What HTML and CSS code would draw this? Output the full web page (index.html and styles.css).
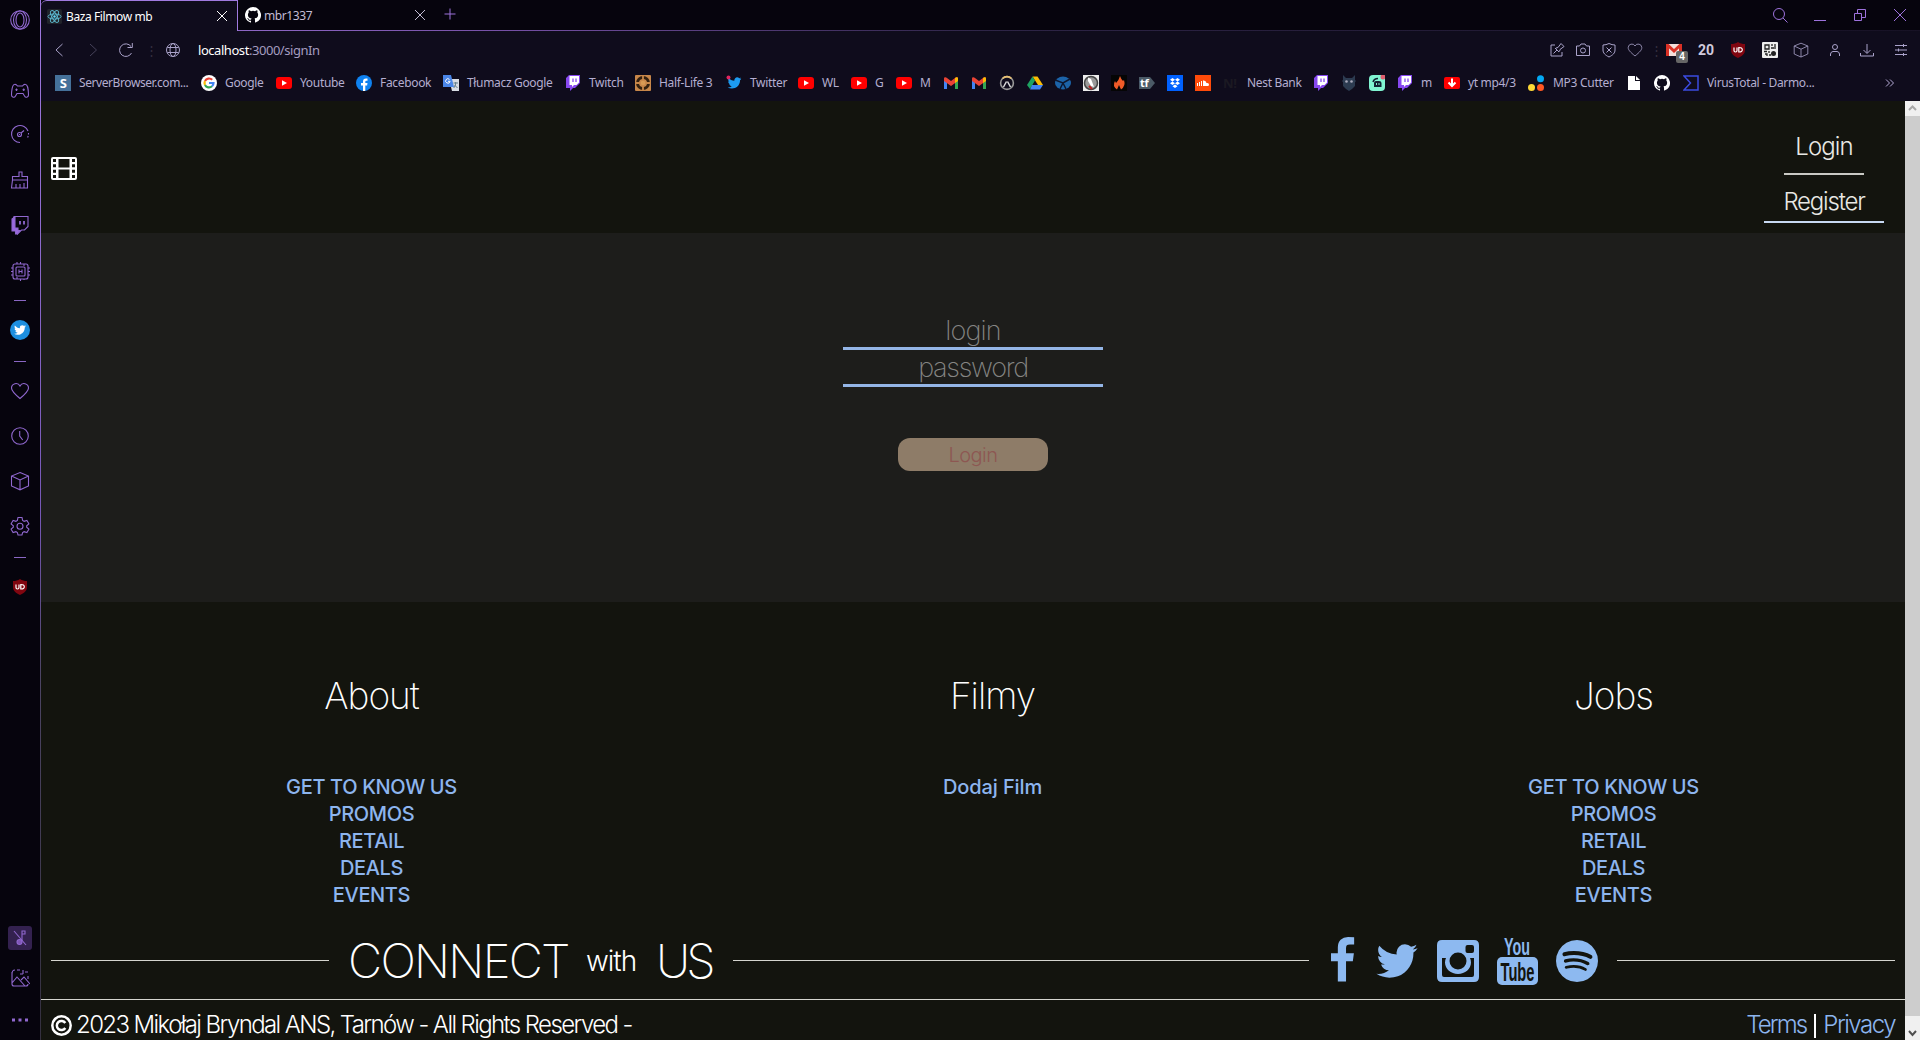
FILE: index.html
```html
<!DOCTYPE html>
<html lang="pl">
<head>
<meta charset="utf-8">
<title>Baza Filmow mb</title>
<link rel="stylesheet" href="styles.css">
</head>
<body>
<svg class="defs" aria-hidden="true">
  <symbol id="yt" viewBox="0 0 16 16"><rect y="2" width="16" height="12" rx="3" fill="#f00"/><path d="M6 5.2v5.6L11 8z" fill="#fff"/></symbol>
  <symbol id="twitch" viewBox="0 0 16 16"><path d="M4 0 1 3v10h4v3l3-3h2l5-5V0z" fill="#8748f0"/><path d="M4.500 1H14v6.500l-2.500 2.500H9l-2 2v-2H4.500z" fill="#fff"/><path d="M8 3.500v3.500M11 3.500v3.500" stroke="#8748f0" stroke-width="1.300"/></symbol>
  <symbol id="gmail" viewBox="0 0 16 16"><path d="M1 14V4l3 2v8z" fill="#4285f4"/><path d="M12 14V6l3-2v10z" fill="#34a853"/><path d="M1 6V3.500C1 2 3 2 4 3l4 3 4-3c1-1 3-1 3 .5V6l-7 5z" fill="#ea4335"/><path d="M12 3v5l3-2V3.500C15 2 13 2 12 3z" fill="#fbbc04"/></symbol>
  <symbol id="github" viewBox="0 0 16 16"><path fill="#fff" d="M8 0a8 8 0 0 0-2.530 15.590c.4.070.55-.17.55-.38v-1.490c-2.230.48-2.690-.95-2.690-.95-.36-.92-.89-1.170-.89-1.170-.73-.5.060-.49.060-.49.8.060 1.230.83 1.230.83.71 1.220 1.870.87 2.330.66.070-.52.28-.87.51-1.070-1.780-.2-3.640-.89-3.640-3.950 0-.87.31-1.590.82-2.150-.08-.2-.36-1.020.08-2.120 0 0 .67-.21 2.200.82a7.600 7.600 0 0 1 4 0c1.530-1.040 2.200-.82 2.200-.82.44 1.100.16 1.920.08 2.120.51.56.82 1.270.82 2.150 0 3.070-1.870 3.750-3.650 3.950.29.25.54.73.54 1.480v2.200c0 .21.15.46.55.38A8 8 0 0 0 8 0z"/></symbol>
  <symbol id="bird" viewBox="100 250 1590 1300"><path d="M1684 408q-67 98-162 167 1 14 1 42 0 130-38 259.500t-115.500 248.500-184.500 210.500-258 146-323 54.500q-271 0-496-145 35 4 78 4 225 0 401-138-105-2-188-64.500t-114-159.500q33 5 61 5 43 0 85-11-112-23-185.500-111.500t-73.500-205.500v-4q68 38 146 41-66-44-105-115t-39-154q0-88 44-163 121 149 294.500 238.500t371.500 99.500q-8-38-8-74 0-134 94.500-228.500t228.500-94.500q140 0 236 102 109-21 205-78-37 115-142 178 93-10 186-50z" fill="currentColor"/></symbol>
  <symbol id="heart" viewBox="0 0 20 20"><path d="M10 17.500C4 12.500 1.500 10 1.500 7A4.500 4.500 0 0 1 10 5a4.500 4.500 0 0 1 8.500 2c0 3-2.500 5.500-8.500 10.500z"/></symbol>
  <symbol id="cube" viewBox="0 0 20 20"><path d="M10 1.500 18.500 5v10L10 18.800 1.500 15V5zM1.500 5 10 9l8.500-4M10 9v9.800"/></symbol>
  <symbol id="ublock" viewBox="0 0 16 16"><path d="M8 0c2 1.500 4.500 2 7 2v6c0 4-3 6-7 8-4-2-7-4-7-8V2c2.500 0 5-.5 7-2z" fill="#800610"/><path d="M4 5.500v3q0 1.500 1.500 1.500T7 8.500v-3M8.800 5.500V10q3.500.2 3.500-2.200T8.800 5.500z" fill="none" stroke="#fff" stroke-width="1.200"/></symbol>
  <symbol id="close" viewBox="0 0 12 12"><path d="m1 1 10 10M11 1 1 11"/></symbol>
</svg>
<div class="browser">
  <nav class="sidebar">
    <svg viewBox="0 0 20 20"><circle cx="10" cy="10" r="9.300"/><ellipse cx="10" cy="10" rx="6.500" ry="9"/><ellipse cx="10" cy="10" rx="4" ry="7"/></svg>
    <svg viewBox="0 0 20 20"><path d="M4.500 3.500Q6 3 7.500 5h5q1.500-2 3-1.500c2.500 0 3 8 3 10.500s-3 3-4 1l-1.500-2.500H7L5.500 15c-1 2-4 1.500-4-1s.5-10.500 3-10.500zM5.300 8.800h2.400M6.500 7.600V10M12.500 8.800h2.400M13.700 7.600V10"/></svg>
    <svg viewBox="0 0 20 20"><path d="M10 18.500A8.500 8.500 0 1 1 18 7"/><path d="M18.500 9a8.500 8.500 0 0 1-1.500 5.500" stroke-dasharray="1.500 1.500"/><circle cx="9.500" cy="10.500" r="2"/><path d="m11 9 3-2.500M9.500 10v1"/></svg>
    <svg viewBox="0 0 20 20"><path d="M2.500 10h15v-3.500H12V2H9v4.500H2.500V10l-1 8h16V10M6 14v4M10 14v4M14 13v5"/></svg>
    <svg viewBox="0 0 20 20"><path d="M4 1.500h14v10l-3.500 3.500h-3l-4 4V15H3V4z"/><path d="M2 4 5 2v11h3v2.500h2L7 19H5.500v-3H2z" fill="#9a68e0"/><path d="M10 6v3.500M14 6v3.500" stroke-width="1.800"/></svg>
    <svg viewBox="0 0 20 20"><rect x="3" y="3" width="15" height="15" rx="2"/><rect x="6" y="6" width="9" height="9" rx="1"/><path d="M9 8.500v4M12 8.500v4M9 10.500h3M7 3V1M10.500 3V1M14 3v2M7 18v-2M10.500 18v2M14 18v1M3 7H1M3 10.500H1M3 14H1M18 7h2M18 10.500h2M18 14h2"/></svg>
    <i class="dash"></i>
    <span class="round"><svg><use href="#bird"/></svg></span>
    <i class="dash"></i>
    <svg><use href="#heart"/></svg>
    <svg viewBox="0 0 20 20"><circle cx="10" cy="10" r="8.300"/><path d="M9.700 5v5l3 4"/></svg>
    <svg><use href="#cube"/></svg>
    <svg viewBox="0 0 20 20"><path d="M8 1.500h4l.6 2.900 1.500.9 2.800-.9 2 3.400-2.200 2v1.400l2.200 2-2 3.400-2.800-.9-1.500.9-.6 2.400H8l-.6-2.400-1.500-.9-2.800.9-2-3.400 2.200-2V9.800l-2.200-2 2-3.400 2.800.9 1.500-.9z"/><circle cx="10" cy="10.300" r="3"/></svg>
    <i class="dash"></i>
    <svg class="small"><use href="#ublock"/></svg>
    <span class="muted"><svg viewBox="0 0 20 20"><path d="M12 13V3h3v3h-3"/><circle cx="9.500" cy="14" r="2.500" fill="#8055b8"/><path d="m4 3 12 14"/></svg></span>
    <svg viewBox="0 0 20 20"><path d="M2 4v12q0 2 2 2h12q2 0 2-2M2 6q0-4 3-4M7 2h3M13 2v4M15 4h3M18 8v3M2 15l5-6 8 9M11 12l3-3 6 7M10 6h3"/></svg>
    <svg viewBox="0 0 20 20"><path d="M2 10h3M8.500 10h3M15 10h3" stroke-width="2.800"/></svg>
  </nav>
  <div class="window">
    <div class="tabs">
      <div class="tab active">
        <svg class="react" viewBox="0 0 16 16"><rect width="16" height="16" rx="2" fill="#20232a"/><g fill="none" stroke="#5cb9d0"><ellipse cx="8" cy="8" rx="7" ry="2.700"/><ellipse cx="8" cy="8" rx="7" ry="2.700" transform="rotate(60 8 8)"/><ellipse cx="8" cy="8" rx="7" ry="2.700" transform="rotate(120 8 8)"/></g><circle cx="8" cy="8" r="1.300" fill="#61dafb"/></svg>
        <span>Baza Filmow mb</span><svg class="x"><use href="#close"/></svg>
      </div>
      <div class="tab">
        <svg class="gh"><use href="#github"/></svg><span>mbr1337</span><svg class="x"><use href="#close"/></svg>
      </div>
      <svg class="plus" viewBox="0 0 12 12"><path d="M6 .5v11M.5 6h11"/></svg>
      <div class="controls">
        <svg viewBox="0 0 16 16"><circle cx="7" cy="7" r="5.500"/><path d="m11 11 4.500 4.500"/></svg>
        <svg viewBox="0 0 16 16"><path d="M2 13.500h12"/></svg>
        <svg viewBox="0 0 16 16"><path d="M2.500 6.500h7v7h-7zM5.500 6.500v-4h8v8h-4"/></svg>
        <svg viewBox="0 0 16 16"><path d="m2 2 12 12M14 2 2 14"/></svg>
      </div>
    </div>
    <div class="toolbar">
      <svg viewBox="0 0 16 16"><path d="M11.500 2 5 8l6.500 6"/></svg>
      <svg class="off" viewBox="0 0 16 16"><path d="m5 2 6.500 6L5 14"/></svg>
      <svg viewBox="0 0 16 16"><path d="M13.500 11A6.300 6.300 0 1 1 13 4.500M14.300 1v4.500H9.500"/></svg>
      <span class="sep">⋮</span>
      <svg viewBox="0 0 16 16"><circle cx="8" cy="8" r="6.500"/><ellipse cx="8" cy="8" rx="3" ry="6.500"/><path d="M2.300 5.500h11.400M2.300 10.500h11.400"/></svg>
      <p class="url"><b>localhost</b>:3000/signIn</p>
      <div class="actions">
        <svg viewBox="0 0 16 16"><path d="M6 3H2v11h11v-4M4.500 11.500 8 8M6 6l4 4M7 6l2-.5 3-4 3 3-4 3-.5 2"/></svg>
        <svg viewBox="0 0 16 16"><path d="M1.500 4h3L6 2h4l1.500 2h3v9.500h-13z"/><circle cx="8" cy="8.500" r="2.500"/></svg>
        <svg viewBox="0 0 16 16"><path d="M8 1.500q3 1.500 6 1.500v5c0 3-2 5-6 7-4-2-6-4-6-7V3q3 0 6-1.500zM5.500 5.500l5 5M10.500 5.500l-5 5"/></svg>
        <svg><use href="#heart"/></svg>
        <span class="sep">⋮</span>
        <span class="mail"><svg viewBox="0 0 16 12"><path d="M0 0h16v12H0z" fill="#f4dedb"/><path d="M1.500 12V1L8 7l6.500-6v11" fill="none" stroke="#d93025" stroke-width="3"/></svg><em>4</em></span>
        <strong>20</strong>
        <svg class="solid"><use href="#ublock"/></svg>
        <svg class="solid" viewBox="0 0 16 16"><rect width="16" height="16" rx="1" fill="#eee"/><path d="M3 3h4v4H3zM10 2v2M13 2v5M9 6h3M2 9.500h3M3 12h2v2M7 9v2M7 13h2" fill="none" stroke="#222" stroke-width="1.300"/><circle cx="11.500" cy="11.500" r="2.500" fill="#222"/></svg>
        <svg><use href="#cube"/></svg>
        <svg viewBox="0 0 16 16"><circle cx="8" cy="5" r="2.500"/><path d="M3.500 14v-2Q4 9.500 6 9.500h4q2 0 2.500 2.500v2"/></svg>
        <svg viewBox="0 0 16 16"><path d="M8 2v9M4.500 8 8 11.500 11.500 8M1.500 11v3h13v-3"/></svg>
        <svg viewBox="0 0 16 16"><path d="M2 3.500h12M2 8h12M2 12.500h12M10.500 2v3M5.500 6.500v3M10.500 11v3"/></svg>
      </div>
    </div>
    <div class="bookmarks">
      <a class="server"><svg viewBox="0 0 16 16"><rect width="16" height="16" fill="#45719a"/><text x="8" y="13" text-anchor="middle" class="ico-s">S</text></svg>ServerBrowser.com...</a>
      <a><svg viewBox="0 0 16 16"><circle cx="8" cy="8" r="8" fill="#fff"/><g fill="none" stroke-width="2.200"><path d="M4 6a4.500 4.500 0 0 1 7.200-1.200" stroke="#ea4335"/><path d="M4 10a4.500 4.500 0 0 1 0-4" stroke="#fbbc05"/><path d="M11 11.300A4.500 4.500 0 0 1 4 10" stroke="#34a853"/><path d="M8 8h4.500a4.500 4.500 0 0 1-1.500 3.300" stroke="#4285f4"/></g></svg>Google</a>
      <a><svg><use href="#yt"/></svg>Youtube</a>
      <a><svg viewBox="0 0 16 16"><circle cx="8" cy="8" r="8" fill="#0f82f0"/><path d="M7 16v-5.500H5V8h2V6.500Q7 3.500 10 3.500h1.500v2.200h-1.200q-1 0-1 1V8h2.200l-.4 2.500H9.300V16z" fill="#fff"/></svg>Facebook</a>
      <a><svg viewBox="0 0 16 16"><path d="M6 4h10v12H9z" fill="#d8dce4"/><path d="M0 0h8l3 12H0z" fill="#4a86e8"/><path d="M7 6.500A2.200 2.200 0 1 1 6.500 4.500M5 6.300h2.200" fill="none" stroke="#fff"/><path d="M10.500 8h4.500M12.700 7v1q0 3-2 5M11.500 10l3 3" fill="none" stroke="#607d8b"/></svg>Tłumacz Google</a>
      <a><svg><use href="#twitch"/></svg>Twitch</a>
      <a><svg viewBox="0 0 16 16"><rect width="16" height="16" rx="1" fill="#c8874a"/><circle cx="8" cy="8" r="5.500" fill="none" stroke="#33200f" stroke-width="3"/><path d="M8 0v16M0 8h16" stroke="#c8874a" stroke-width="1.800"/><circle cx="8" cy="8" r="2.300" fill="#d89a55"/></svg>Half-Life 3</a>
      <a><svg class="tw" viewBox="0 0 16 16"><use href="#bird" x="1.500" y="2" width="14" height="12"/><circle cx="2.500" cy="2.500" r="2" fill="#e0245e"/></svg>Twitter</a>
      <a><svg><use href="#yt"/></svg>WL</a>
      <a><svg><use href="#yt"/></svg>G</a>
      <a><svg><use href="#yt"/></svg>M</a>
      <a><svg><use href="#gmail"/></svg></a>
      <a><svg><use href="#gmail"/></svg></a>
      <a><svg viewBox="0 0 16 16"><circle cx="8" cy="8" r="6.400" fill="none" stroke="#999" stroke-width="1.600"/><path d="M3.500 3.500a6.400 6.400 0 0 1 9 0" fill="none" stroke="#e8c070" stroke-width="1.600"/><path d="m4.500 12 3-5.500M11.500 12l-3-5.500" stroke="#ddd" stroke-width="1.500"/></svg></a>
      <a><svg viewBox="0 0 16 16"><path d="M5.500 1.500h5L16 10h-5z" fill="#fbbc04"/><path d="M5.500 1.500 8 5.500 3 14l-3-4z" fill="#1ea362"/><path d="M5 10h11l-3 4.500H3z" fill="#4285f4"/></svg></a>
      <a><svg viewBox="0 0 16 16"><ellipse cx="8" cy="8" rx="8" ry="6.500" fill="#1c63a8"/><path d="m0 5 8 3 7-4M8 8l-3 6M8 8l3 6" fill="none" stroke="#0d1730" stroke-width="1.500"/></svg></a>
      <a><svg viewBox="0 0 16 16"><rect width="16" height="16" fill="#eee"/><circle cx="8" cy="8" r="6.500" fill="#999" stroke="#444" stroke-width="1.500"/><path d="M5 2.500 8 4l3 8-3-1-3-5z" fill="#fff"/><path d="m6 11 3 3" stroke="#b22" stroke-width="2"/></svg></a>
      <a><svg viewBox="0 0 16 16"><rect width="16" height="16" fill="#050505"/><path d="M9 1q1 3 3 5l1-1q2 6-3 9.500L8 10l-2 4.500Q1 11 4 6l1 2q3-3 4-7z" fill="#ef5a28"/></svg></a>
      <a><svg viewBox="0 0 16 16"><path d="M0 2h11l5 6-5 6H0z" fill="#4b5a66"/><text x="1" y="12" class="ico-t">tf</text></svg></a>
      <a><svg viewBox="0 0 16 16"><rect width="16" height="16" fill="#0061fe"/><path d="m5.500 3 2.500 1.700-2.500 1.700L3 4.700zm5 0L13 4.700l-2.500 1.700L8 4.700zm-5 3.500L8 8.200 5.500 9.900 3 8.200zm5 0L13 8.200l-2.500 1.700L8 8.200zM8 9.500l2.500 1.700L8 13l-2.500-1.800z" fill="#fff"/></svg></a>
      <a><svg viewBox="0 0 16 16"><rect width="16" height="16" fill="#ff4b0a"/><path d="M2.500 8v3M4.500 7v4M6.500 6v5" stroke="#fff"/><path d="M8 11V5.500Q11 5 11.500 8q2.500-.5 2.500 1.500T12 11z" fill="#fff"/></svg></a>
      <a><svg viewBox="0 0 16 16"><text x="0" y="13" class="ico-n">N!</text></svg>Nest Bank</a>
      <a><svg><use href="#twitch"/></svg></a>
      <a><svg viewBox="0 0 16 16"><path d="M2 0 5 3h6l3-3v5l1 1-1 1v4l-3 3-3 2-3-2-3-3V7L1 6l1-1z" fill="#2c3b50"/><circle cx="5.500" cy="6.500" r="1.300" fill="#aab"/><circle cx="10.500" cy="6.500" r="1.300" fill="#aab"/></svg></a>
      <a><svg viewBox="0 0 16 16"><rect width="16" height="16" rx="4" fill="#80f5d2"/><path d="M5 12V8q0-2 2-2h3q2.500 0 2.500 2v4z" fill="#123"/><path d="M4 7q1-3.500 5-3.500" fill="none" stroke="#123" stroke-width="1.500"/><path d="M7.500 8v2M10 8v2" stroke="#80f5d2"/><circle cx="14" cy="2" r="2.500" fill="#e06070"/></svg></a>
      <a><svg><use href="#twitch"/></svg>m</a>
      <a><svg viewBox="0 0 16 16"><rect y="2" width="16" height="12" rx="2" fill="#f00"/><path d="M8 3.500v6M4.500 7.500 8 11l3.500-3.500" fill="none" stroke="#fff" stroke-width="2"/></svg>yt mp4/3</a>
      <a class="cutter"><svg viewBox="0 0 16 16"><circle cx="3.500" cy="12.500" r="3.500" fill="#fdd835"/><circle cx="12.500" cy="12.500" r="3.500" fill="#ff5722"/><circle cx="12.500" cy="3.700" r="3.500" fill="#03a9f4"/></svg>MP3 Cutter</a>
      <a><svg viewBox="0 0 16 16"><path d="M2 1h7v5h5v9H2zM10 1l4 4h-4z" fill="#fff"/></svg></a>
      <a><svg><use href="#github"/></svg></a>
      <a><svg viewBox="0 0 16 16"><path d="M1 1h14v14H1l6.500-7z" fill="none" stroke="#3b4be0" stroke-width="1.500"/></svg>VirusTotal - Darmo...</a>
      <a><svg viewBox="0 0 16 16"><path d="m5 4.500 3.500 3.500L5 11.500M9 4.500l3.500 3.500L9 11.500" fill="none" stroke="#b5abd6"/></svg></a>
    </div>
    <div class="view">
      <div class="page">
        <header>
          <svg class="film" viewBox="0 0 26 23"><path fill-rule="evenodd" fill="#fff" d="M2 0h22q2 0 2 2v19q0 2-2 2H2q-2 0-2-2V2Q0 0 2 0zM7.500 2v8.500h11V2zM7.500 12.500V21h11v-8.500zM2 2v3h3V2zM2 7.300v3h3v-3zM2 12.700v3h3v-3zM2 18v3h3v-3zM21 2v3h3V2zM21 7.300v3h3v-3zM21 12.700v3h3v-3zM21 18v3h3v-3z"/></svg>
          <div class="auth"><a class="in">Login</a><a class="up">Register</a></div>
        </header>
        <main>
          <form>
            <input type="text" placeholder="login">
            <input type="password" class="pass" placeholder="password">
            <button type="button">Login</button>
          </form>
        </main>
        <footer>
          <div class="columns">
            <section><h2>About</h2><ul><li>GET TO KNOW US</li><li>PROMOS</li><li>RETAIL</li><li>DEALS</li><li>EVENTS</li></ul></section>
            <section><h2>Filmy</h2><ul><li class="film-link">Dodaj Film</li></ul></section>
            <section><h2>Jobs</h2><ul><li>GET TO KNOW US</li><li>PROMOS</li><li>RETAIL</li><li>DEALS</li><li>EVENTS</li></ul></section>
          </div>
          <div class="connect">
            <hr class="first">
            <span class="big c1">CONNECT</span><span class="with">with</span><span class="big c2">US</span>
            <hr class="middle">
            <div class="social">
              <svg width="24" height="48" viewBox="479 0 896 1792"><path d="M1343 12v264h-157q-86 0-116 36t-30 108v189h293l-39 296h-254v759h-306v-759h-255v-296h255v-218q0-186 104-288.500t277-102.500q147 0 228 12z"/></svg>
              <svg width="42" height="34"><use href="#bird"/></svg>
              <svg width="42" height="42" viewBox="0 0 42 42"><path fill-rule="evenodd" d="M5 0h32q5 0 5 5v32q0 5-5 5H5q-5 0-5-5V5q0-5 5-5zM5 18v17q0 2 2 2h28q2 0 2-2V18h-4q1 2 1 4.500C34 29 28 34 21 34S8 29 8 22.500q0-2.500 1-4.500zM30.500 5q-2 0-2 2v4q0 2 2 2H35q2 0 2-2V7q0-2-2-2zM21 12.500a8.500 8.500 0 1 0 0 17 8.500 8.500 0 0 0 0-17z"/></svg>
              <svg class="youtube" width="41" height="48" viewBox="0 0 41 48"><rect y="20" width="41" height="28" rx="5"/><text x="7" y="17.500" textLength="26" lengthAdjust="spacingAndGlyphs">You</text><text x="3.500" y="43.500" textLength="34" lengthAdjust="spacingAndGlyphs" class="dark">Tube</text></svg>
              <svg width="42" height="42" viewBox="128 128 1536 1536"><path d="M1255 1210q0-32-30-51-193-115-447-115-133 0-287 34-42 9-42 52 0 20 13.500 34.500t35.500 14.500q5 0 37-8 132-27 243-27 226 0 397 103 19 11 33 11 19 0 33-13.500t14-34.500zm96-215q0-40-35-61-237-141-548-141-153 0-303 42-48 13-48 64 0 25 17.500 42.500t42.500 17.500q7 0 37-8 122-33 251-33 279 0 488 124 24 13 38 13 25 0 42.500-17.500t17.500-42.500zm108-248q0-47-40-70-126-73-293-110.500t-343-37.500q-204 0-364 47-23 7-38.500 25.500t-15.500 48.500q0 31 20.500 52t51.500 21q11 0 40-8 133-37 307-37 159 0 309.500 34t253.500 95q21 12 40 12 29 0 50.500-20.500t21.500-51.500zm205 149q0 209-103 385.500t-279.500 279.500-385.500 103-385.500-103-279.500-279.500-103-385.500 103-385.500 279.500-279.500 385.500-103 385.500 103 279.500 279.500 103 385.500z"/></svg>
            </div>
            <hr class="last">
          </div>
          <div class="legal">
            <svg class="copy" viewBox="0 0 21 21"><circle cx="10.500" cy="10.500" r="9.200"/><path d="M14.300 13a4.600 4.600 0 1 1 0-5"/></svg>
            <span class="rights">2023 Mikołaj Bryndal ANS, Tarnów - All Rights Reserved -</span>
            <span class="terms">Terms</span><i class="bar"></i><span class="privacy">Privacy</span>
          </div>
        </footer>
      </div>
      <div class="scrollbar">
        <svg viewBox="0 0 15 15"><path d="m4 9 3.500-3.500L11 9" stroke="#a8a8a8"/></svg>
        <i></i>
        <svg class="down" viewBox="0 0 15 24"><path d="m4 15 3.500 4 3.500-4" stroke="#505050"/></svg>
      </div>
    </div>
  </div>
</div>
</body>
</html>
```
FILE: styles.css
```css
* { box-sizing: border-box; }
body { margin: 0; background: #06040d; font-family: "Inter", "Liberation Sans", sans-serif; overflow: hidden; }
svg { display: block; flex: none; }
.defs { position: absolute; width: 0; height: 0; }
.browser { display: flex; width: 1920px; height: 1040px; }

.sidebar { width: 40px; display: grid; justify-items: center; align-items: start;
  grid-template-rows: 71px 43px 46px 45px 46px 39px 20px 41px 20px 45px 45px 45px 41px 22px 347px 42px 42px 30px;
  padding-top: 10px; }
.sidebar svg { width: 20px; height: 20px; fill: none; stroke: #9068cf; stroke-width: 1.1; }
.sidebar .small { width: 16px; height: 16px; stroke: none; }
.dash { width: 12px; height: 1px; background: #8a67c4; }
.round { width: 20px; height: 20px; border-radius: 50%; background: #1d8fdf; display: grid; place-items: center; color: #fff; }
.sidebar .round svg { width: 12px; height: 10px; stroke: none; }
.muted { width: 24px; height: 24px; border-radius: 3px; background: #33214f; display: grid; place-items: center; }

.window { width: 1880px; display: flex; flex-direction: column; border-left: 1px solid;
  border-image: linear-gradient(#a07ae0, #7557b5 50%, #4c4463 65%, #34303f) 1; }
.tabs { height: 31px; display: flex; background: linear-gradient(90deg, #a078dc, #7550a5 25%, #2e2547 50%, #171225) 0 100% / 100% 1px no-repeat; }
.tab { width: 199px; height: 30px; padding-left: 8px; display: flex; align-items: center; font: 12px "Noto Sans", sans-serif; color: #c3bcd4; }
.tab.active { width: 197px; height: 31px; background: #0f0c1c; border-top: 1px solid #a07ae0; border-right: 1px solid #a07ae0; border-top-left-radius: 6px; padding-left: 6px; color: #fff; }
.react { width: 15px; height: 15px; margin-right: 4px; }
.gh { width: 16px; height: 16px; margin-left: -1px; margin-right: 3px; }
.tab span { flex: 1; letter-spacing: -.4px; }
.x { width: 12px; height: 12px; stroke: currentColor; margin-right: 8px; }
.active .x { margin-right: 9px; }
.tab:not(.active) .x { margin-right: 11px; }
.plus { width: 12px; height: 12px; margin: 8px 0 0 7px; fill: none; stroke: #9d72dc; }
.controls { margin: 7px 12px 0 auto; display: flex; gap: 24px; }
.controls svg { width: 16px; height: 16px; fill: none; stroke: #9d72dc; }

.toolbar { height: 37px; background: #0f0c1c; display: grid; align-items: center;
  grid-template-columns: 34px 33px 27px 20px 33px 1343px 1fr; padding-left: 10px; }
.toolbar > svg, .actions > svg { width: 16px; height: 16px; fill: none; stroke: #aaa3ca; }
.toolbar .off { stroke: #46425a; }
.toolbar .solid { stroke: none; }
.sep { color: #33303f; font-size: 13px; }
.url { margin: 0; font: 13px "Noto Sans", sans-serif; letter-spacing: -.45px; color: #a49cc0; }
.url b { color: #fff; font-weight: 400; }
.actions { margin-left: 8px; display: grid; align-items: center; grid-template-columns: 26px 26px 26px 23px 16px 32px 32px 32px 31px 34px 32px 34px 16px; }
.actions strong { font: 700 14px/16px Roboto, sans-serif; color: #d0cadd; }
.mail { position: relative; }
.mail svg { width: 16px; height: 12px; }
.mail em { position: absolute; left: 10px; top: 7px; width: 12px; height: 12px; border-radius: 2px; background: #666; color: #fff; font: 700 10px/12px "Liberation Sans", sans-serif; text-align: center; }

.bookmarks { height: 33px; background: #0f0c1c; padding: 0 0 3px 14px; display: grid; align-items: center;
  grid-template-columns: 146px 75px 80px 87px 122px 70px 91px 72px 53px 45px 47px repeat(10, 28px) 90px repeat(3, 28px) 47px 84px 98px 28px 29px 198px 20px; }
.bookmarks a { display: flex; align-items: center; gap: 8px; white-space: nowrap; font: 12px/16px "Noto Sans", sans-serif; letter-spacing: -.33px; color: #b4aed0; }
.bookmarks .server { letter-spacing: -.42px; }
.bookmarks .cutter { gap: 9px; letter-spacing: -.28px; }
.bookmarks svg { width: 16px; height: 16px; }
.tw { color: #1d9bf0; }
.ico-s { font: 700 13px "Noto Sans", sans-serif; fill: #fff; }
.ico-t { font: 700 11px "Noto Sans", sans-serif; fill: #fff; }
.ico-n { font: 700 13px "Noto Sans", sans-serif; fill: #1b1922; }

.view { display: flex; height: 939px; }
.page { width: 1864px; color: #fff; }
header { height: 132px; background: #13140e; display: flex; justify-content: space-between; padding: 0 21px 0 10px; }
.film { width: 26px; height: 23px; margin-top: 56px; }
.auth { width: 120px; display: flex; flex-direction: column; align-items: center; font-weight: 300; font-size: 24px; line-height: 30px; letter-spacing: -.9px; color: #e8e8e4; }
.auth .in { width: 80px; height: 50px; margin-top: 24px; padding-top: 7px; border-bottom: 2px solid #c9c9c4; text-align: center; }
.auth .up { width: 120px; height: 39px; margin-top: 9px; padding-top: 3px; border-bottom: 2px solid #c8d9f2; text-align: center; letter-spacing: -1.2px; }
main { height: 369px; background: #1d1d1b; }
form { display: flex; flex-direction: column; align-items: center; padding-top: 80px; }
input { width: 260px; height: 37px; padding: 0; border: 0; border-bottom: 3px solid #94b5e6; background: none; text-align: center; font: 200 27px "Inter", sans-serif; letter-spacing: -.9px; }
.pass { letter-spacing: -1.3px; }
input::placeholder { color: #858583; opacity: 1; }
button { width: 150px; height: 33px; margin-top: 51px; border: 0; border-radius: 12px; background: #8e7c68; color: #8d5752; font: 300 20px "Inter", sans-serif; letter-spacing: -.5px; }
footer { height: 438px; background: #13140e; overflow: hidden; }
.columns { display: grid; grid-template-columns: repeat(3, 621px); padding: 70px 0 0 20px; height: 326px; text-align: center; }
h2 { margin: 0; height: 102px; font-size: 37px; line-height: 48px; font-weight: 200; letter-spacing: -1px; }
ul { list-style: none; margin: 0; padding: 0; font-size: 20px; line-height: 27px; font-weight: 500; letter-spacing: -.35px; color: #8db5ee; }
.film-link { letter-spacing: -.1px; }
.connect { height: 65px; margin-bottom: 6px; display: flex; align-items: center; padding-left: 10px; white-space: nowrap; }
hr { margin: 0; border: 0; height: 1px; background: #d5d5cf; }
.first { width: 278px; }
.middle { width: 576px; }
.last { width: 278px; }
.big { font-size: 47px; font-weight: 200; line-height: 56px; }
.c1 { width: 238px; margin-left: 19px; letter-spacing: -1.7px; }
.with { width: 70px; font-size: 28px; font-weight: 300; letter-spacing: -1px; }
.c2 { width: 77px; letter-spacing: -4px; }
.social { display: grid; align-items: center; grid-template-columns: 45px 61px 60px 59px 61px; margin-left: 22px; fill: #8db9f0; color: #8db9f0; }
.youtube { overflow: visible; }
.social text { font: 700 23px "Liberation Sans", sans-serif; }
.social .dark { fill: #13140e; font-size: 25px; }
.legal { border-top: 1px solid #d5d5cf; height: 41px; display: flex; align-items: flex-start; padding: 9px 10px 0; font-size: 24px; line-height: 32px; font-weight: 300; white-space: nowrap; }
.copy { width: 21px; height: 21px; margin: 6px 4px 0 0; fill: none; stroke: #fff; stroke-width: 2.500; }
.rights { flex: 1; letter-spacing: -1.6px; }
.terms, .privacy { color: #8db5ee; letter-spacing: -1.5px; }
.terms { letter-spacing: -1.9px; }
.bar { width: 2px; height: 24px; margin: 5px 7px 0 8px; background: #fff; }
.scrollbar { width: 15px; display: flex; flex-direction: column; background: #f0f0f0; }
.scrollbar svg { width: 15px; fill: none; stroke-width: 2; }
.scrollbar i { flex: 1; background: #cdcdcd; }
```
